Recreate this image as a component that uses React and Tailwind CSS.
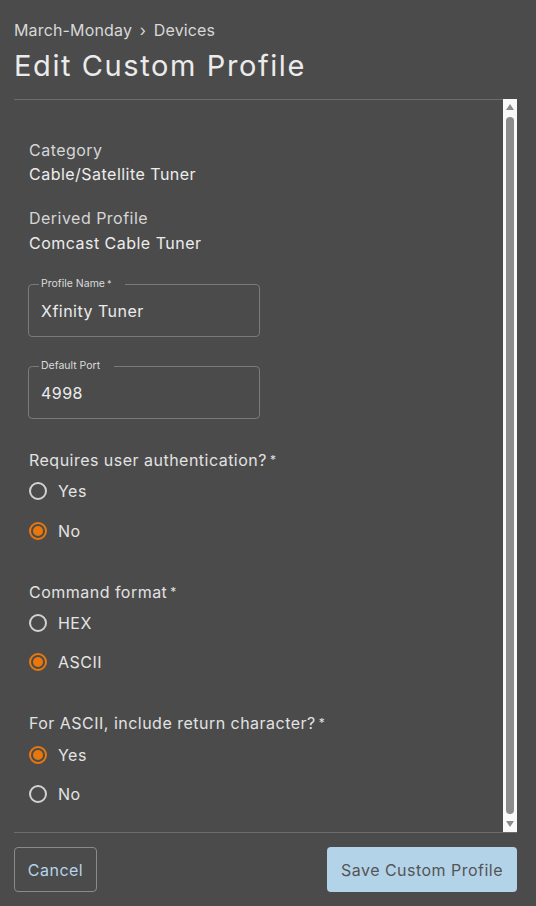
import React from "react";

const Radio = ({ label, checked }) => (
  <div className="flex items-center h-[20px] gap-[11px]">
    {checked ? (
      <span className="w-[18px] h-[18px] rounded-full border-2 border-[#e8780e] flex items-center justify-center">
        <span className="w-[10px] h-[10px] rounded-full bg-[#e8780e]" />
      </span>
    ) : (
      <span className="w-[18px] h-[18px] rounded-full border-2 border-[#d2d2d2]" />
    )}
    <span className="text-[16px] text-[#e4e4e4]">{label}</span>
  </div>
);

const Field = ({ label, required, value }) => (
  <fieldset className="w-[232px] h-[59px] border border-[#7a7a7a] rounded-[4px] px-[12px] m-0">
    <legend className="ml-[-2px] px-[2px] text-[10.5px] text-[#dcdcdc] leading-[12px] tracking-normal">
      {label}
      {required && <span className="align-top text-[9px] ml-[2px]">*</span>}
      <span className="inline-block w-[12px]" />
    </legend>
    <div className="text-[16px] text-[#ececec] mt-[9px]">{value}</div>
  </fieldset>
);

const Question = ({ label, children }) => (
  <div className="flex flex-col">
    <div className="text-[16px] text-[#e2e2e2] h-[20px] leading-[20px]">
      {label}
      <span className="align-top text-[12px] ml-[3px]">*</span>
    </div>
    {children}
  </div>
);

export default function App() {
  return (
    <div
      className="w-[536px] h-[906px] bg-[#4b4b4b] flex flex-col pl-[14px] pr-[19px] text-[#e6e6e6] tracking-[0.03em]"
      style={{ fontFamily: "Inter, 'Open Sans', sans-serif" }}
    >
      <div className="pt-[20px] text-[16px] text-[#d8d8d8] leading-[20px] tracking-[0.01em]">
        March-Monday <span className="mx-[3px]">›</span> Devices
      </div>
      <h1 className="text-[29px] leading-[36px] mt-[8px] text-[#ebebeb] font-normal tracking-[0.055em]">
        Edit Custom Profile
      </h1>
      <div className="mt-[15px] border-t border-[#6c6c6c] h-[733px] flex">
        <div className="flex-1 pl-[15px] pt-[40px] flex flex-col">
          <div className="text-[16px] leading-[20px] text-[#d6d6d6]">Category</div>
          <div className="text-[16px] leading-[20px] mt-[4px] text-[#ededed]">Cable/Satellite Tuner</div>
          <div className="text-[16px] leading-[20px] mt-[24px] text-[#d6d6d6]">Derived Profile</div>
          <div className="text-[16px] leading-[20px] mt-[5px] text-[#ededed]">Comcast Cable Tuner</div>
          <div className="mt-[25px] ml-[-1px]">
            <Field label="Profile Name" required value="Xfinity Tuner" />
          </div>
          <div className="mt-[23px] ml-[-1px]">
            <Field label="Default Port" value="4998" />
          </div>
          <div className="mt-[31px]">
            <Question label="Requires user authentication?">
              <div className="mt-[11px] flex flex-col gap-[20px]">
                <Radio label="Yes" />
                <Radio label="No" checked />
              </div>
            </Question>
          </div>
          <div className="mt-[41px]">
            <Question label="Command format">
              <div className="mt-[11px] flex flex-col gap-[19px]">
                <Radio label="HEX" />
                <Radio label="ASCII" checked />
              </div>
            </Question>
          </div>
          <div className="mt-[41px]">
            <Question label="For ASCII, include return character?">
              <div className="mt-[12px] flex flex-col gap-[19px]">
                <Radio label="Yes" checked />
                <Radio label="No" />
              </div>
            </Question>
          </div>
        </div>
        <div className="w-[14px] bg-[#f9f9f9] flex flex-col items-center mt-[-1px]">
          <svg width="8" height="6" viewBox="0 0 8 6" className="mt-[5px]">
            <path d="M4 0 L8 6 L0 6 Z" fill="#8c8c8c" />
          </svg>
          <div className="w-[8px] flex-1 bg-[#8c8c8c] rounded-full mt-[7px] mb-[7px]" />
          <svg width="8" height="6" viewBox="0 0 8 6" className="mb-[5px]">
            <path d="M0 0 L8 0 L4 6 Z" fill="#8c8c8c" />
          </svg>
        </div>
      </div>
      <div className="border-t border-[#6c6c6c] flex justify-between items-center pt-[14px]">
        <button className="h-[45px] w-[83px] border border-[#8a8a8a] rounded-[4px] text-[16px] text-[#b6d4ea]">
          Cancel
        </button>
        <button className="h-[45px] w-[190px] bg-[#b3d3e9] rounded-[4px] text-[16px] text-[#555555]">
          Save Custom Profile
        </button>
      </div>
    </div>
  );
}
